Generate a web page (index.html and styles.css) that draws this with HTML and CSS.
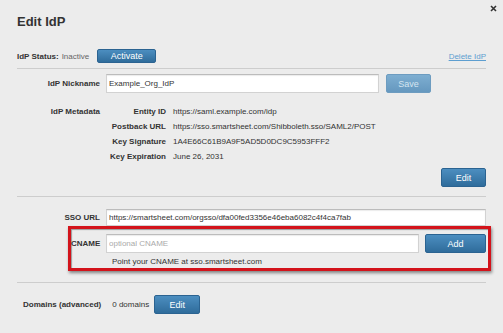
FILE: index.html
```html
<!DOCTYPE html>
<html>
<head>
    <title>Edit IdP</title>
    <link rel="stylesheet" href="styles.css">
</head>
<body>
    <div class="modal">
        <a class="close" href="#" title="Close">
            <svg width="7" height="7" viewBox="0 0 7 7"><path d="M1 1L6 6M6 1L1 6" stroke="#333" stroke-width="1.6"/></svg>
        </a>
        <h1>Edit IdP</h1>

        <div class="status-row">
            <span class="bold">IdP Status:</span>
            <span class="muted">Inactive</span>
            <button class="btn btn-activate">Activate</button>
            <a class="delete-link" href="#">Delete IdP</a>
        </div>
        <hr>

        <div class="row nickname-row">
            <label for="nickname">IdP Nickname</label>
            <input type="text" id="nickname" value="Example_Org_IdP">
            <button class="btn btn-disabled">Save</button>
        </div>

        <div class="row meta-row">
            <span class="label">IdP Metadata</span>
            <div class="meta">
                <span class="key">Entity ID</span><span>https://saml.example.com/idp</span>
                <span class="key">Postback URL</span><span>https://sso.smartsheet.com/Shibboleth.sso/SAML2/POST</span>
                <span class="key">Key Signature</span><span>1A4E66C61B9A9F5AD5D0DC9C5953FFF2</span>
                <span class="key">Key Expiration</span><span>June 26, 2031</span>
            </div>
        </div>
        <div class="actions">
            <button class="btn btn-edit">Edit</button>
        </div>
        <hr>

        <div class="row sso-row">
            <label for="ssoUrl">SSO URL</label>
            <input type="text" id="ssoUrl" value="https://smartsheet.com/orgsso/dfa00fed3356e46eba6082c4f4ca7fab">
        </div>

        <!-- highlighted CNAME block -->
        <div class="highlight">
            <label for="cname">CNAME</label>
            <input type="text" id="cname" placeholder="optional CNAME">
            <button class="btn">Add</button>
            <span class="hint">Point your CNAME at sso.smartsheet.com</span>
        </div>
        <hr class="hr-bottom">

        <div class="domains-row">
            <span class="bold">Domains (advanced)</span>
            <span class="domains-count">0 domains</span>
            <button class="btn btn-domains">Edit</button>
        </div>
    </div>
</body>
</html>
```

FILE: styles.css
```css
body {
    margin: 0;
    background-color: #ececec;
    font-family: "Liberation Sans", Arial, sans-serif;
    font-size: 8px;
    color: #333;
}
.modal {
    position: relative;
    height: 333px;
    padding: 14px 17px 0;
    box-sizing: border-box;
}
.close {
    position: absolute;
    top: 5px;
    right: 6px;
    display: block;
    width: 7px;
    height: 7px;
    line-height: 0;
}
h1 {
    margin: 0;
    font-size: 13px;
    line-height: 16px;
    font-weight: bold;
    color: #333;
}
.bold, label, .label, .key {
    font-weight: bold;
    color: #333;
}
.muted {
    color: #666;
    margin-left: 3px;
}
hr {
    margin: 5px 0 0;
    border: 0;
    border-top: 1px solid #cdcdcd;
    height: 0;
}
.btn {
    height: 19px;
    padding: 0;
    border: 1px solid #2b6391;
    border-radius: 2px;
    background: linear-gradient(#4c8ec0, #2f6c9b);
    color: #fff;
    font-family: "Liberation Sans", Arial, sans-serif;
    font-size: 9px;
    cursor: pointer;
}
.btn-disabled {
    border-color: #6d9cc0;
    background: linear-gradient(#7eaed1, #6598bf);
    color: #d4e4f0;
}
input {
    height: 19px;
    box-sizing: border-box;
    padding: 0 2px;
    border: 1px solid #d2d2d2;
    border-top-color: #bcbcbc;
    box-shadow: inset 0 1px 1px rgba(0, 0, 0, 0.08);
    background-color: #fff;
    font-family: "Liberation Sans", Arial, sans-serif;
    font-size: 8px;
    color: #333;
}
input::placeholder {
    color: #aaa;
}

.status-row {
    display: flex;
    align-items: center;
    margin-top: 19px;
    height: 14px;
}
.btn-activate {
    height: 14px;
    width: 59px;
    margin-left: 8px;
}
.delete-link {
    margin-left: auto;
    color: #5d9ed0;
}

.row {
    display: grid;
    grid-template-columns: 83px auto auto;
    column-gap: 6px;
    align-items: center;
    justify-content: start;
}
.row label, .row .label {
    text-align: right;
}
.nickname-row {
    margin-top: 5px;
}
.nickname-row input {
    width: 273px;
}
.nickname-row .btn {
    width: 45px;
    margin-left: 1px;
}

.meta-row {
    margin-top: 11px;
    align-items: start;
    line-height: 15px;
}
.meta {
    display: grid;
    grid-template-columns: 60px auto;
    column-gap: 7px;
}
.meta .key {
    text-align: right;
}
.actions {
    display: flex;
    justify-content: flex-end;
    margin-top: 4px;
}
.btn-edit {
    width: 45px;
}
.actions + hr {
    margin-top: 9px;
}

.sso-row {
    margin-top: 12px;
    grid-template-columns: 83px 380px;
}
.sso-row input {
    height: 17px;
}

.highlight {
    display: grid;
    grid-template-columns: 29px 313px 61px;
    column-gap: 6px;
    align-items: center;
    margin: 0 -5px 0 51px;
    padding: 4px 2px 0 0;
    height: 45px;
    box-sizing: border-box;
    border: 3px solid #d3131b;
    box-shadow: 1px 2px 3px rgba(0, 0, 0, 0.45), inset 1px 1px 1px rgba(0, 0, 0, 0.35);
}
.highlight label {
    text-align: right;
}
.highlight .hint {
    grid-column: 2 / 4;
    padding-left: 6px;
    line-height: 11px;
}
.hr-bottom {
    margin-top: 11px;
}

.domains-row {
    display: flex;
    align-items: center;
    margin-top: 12px;
    padding-left: 6px;
}
.domains-count {
    margin-left: 11px;
}
.btn-domains {
    width: 46px;
    margin-left: 5px;
}
```
